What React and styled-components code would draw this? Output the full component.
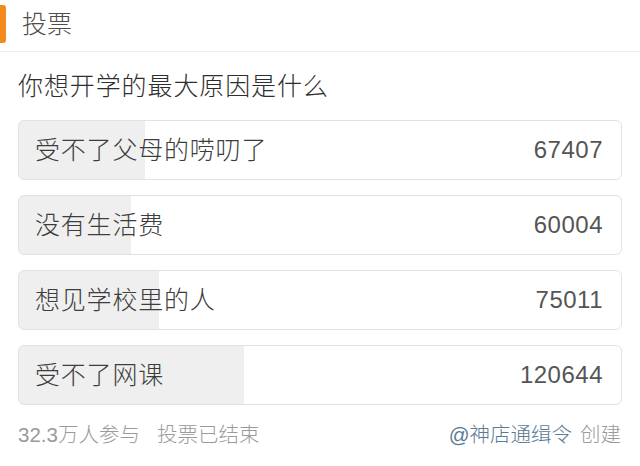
import styled, { createGlobalStyle } from "styled-components";

const GlobalStyle = createGlobalStyle`
  html, body {
    margin: 0;
    padding: 0;
    background: #fff;
  }
  body {
    font-family: "Liberation Sans", "Noto Sans CJK SC", sans-serif;
  }
`;

const PollCard = styled.section`
  width: 640px;
  height: 466px;
  background: #fff;
  display: flex;
  flex-direction: column;
  overflow: hidden;
`;

const Header = styled.header`
  display: flex;
  align-items: center;
  height: 51px;
  border-bottom: 1px solid #eeeeee;
`;

const Accent = styled.span`
  width: 6px;
  height: 38px;
  margin-top: -3px;
  background: #f28a1e;
  border-radius: 0 3px 3px 0;
`;

const HeaderTitle = styled.h2`
  margin: -3px 0 0 16px;
  font-size: 25px;
  font-weight: 300;
  line-height: 30px;
  color: #4d4d4d;
`;

const Question = styled.h3`
  margin: 0;
  padding: 17px 18px 17px;
  font-size: 25px;
  font-weight: 300;
  line-height: 34px;
  color: #2e2e2e;
  letter-spacing: 0.9px;
`;

const OptionList = styled.ul`
  list-style: none;
  margin: 0;
  padding: 0 18px;
  display: flex;
  flex-direction: column;
  gap: 15px;
`;

const OptionRow = styled.li`
  height: 60px;
  box-sizing: border-box;
  display: flex;
  align-items: center;
  justify-content: space-between;
  padding: 0 18px 0 16px;
  border: 1px solid #e2e2e2;
  border-radius: 6px;
  background: linear-gradient(
    to right,
    #efefef ${(p) => p.$pct}%,
    #ffffff ${(p) => p.$pct}%
  );
`;

const OptionLabel = styled.span`
  font-size: 25px;
  font-weight: 300;
  line-height: 30px;
  color: #3d3d3d;
  letter-spacing: 0.8px;
`;

const OptionCount = styled.span`
  font-size: 24px;
  line-height: 30px;
  color: #555;
  letter-spacing: 0.5px;
`;

const Footer = styled.footer`
  display: flex;
  justify-content: space-between;
  align-items: center;
  padding: 0 19px 0 18px;
  margin-top: 17px;
  height: 26px;
  font-size: 20.5px;
  font-weight: 300;
  line-height: 26px;
  color: #9a9a9a;
`;

const Stats = styled.div`
  display: flex;
  gap: 17px;
`;

const Credit = styled.div`
  display: flex;
  gap: 8px;
`;

const Author = styled.span`
  color: #5b7a95;
`;

const options = [
  { label: "受不了父母的唠叨了", count: 67407 },
  { label: "没有生活费", count: 60004 },
  { label: "想见学校里的人", count: 75011 },
  { label: "受不了网课", count: 120644 },
];

const total = options.reduce((sum, o) => sum + o.count, 0);

export default function App() {
  return (
    <>
      <GlobalStyle />
      <PollCard>
        <Header>
          <Accent />
          <HeaderTitle>投票</HeaderTitle>
        </Header>
        <Question>你想开学的最大原因是什么</Question>
        <OptionList>
          {options.map((o) => (
            <OptionRow key={o.label} $pct={((o.count / total) * 100).toFixed(2)}>
              <OptionLabel>{o.label}</OptionLabel>
              <OptionCount>{o.count}</OptionCount>
            </OptionRow>
          ))}
        </OptionList>
        <Footer>
          <Stats>
            <span>32.3万人参与</span>
            <span>投票已结束</span>
          </Stats>
          <Credit>
            <Author>@神店通缉令</Author>
            <span>创建</span>
          </Credit>
        </Footer>
      </PollCard>
    </>
  );
}
